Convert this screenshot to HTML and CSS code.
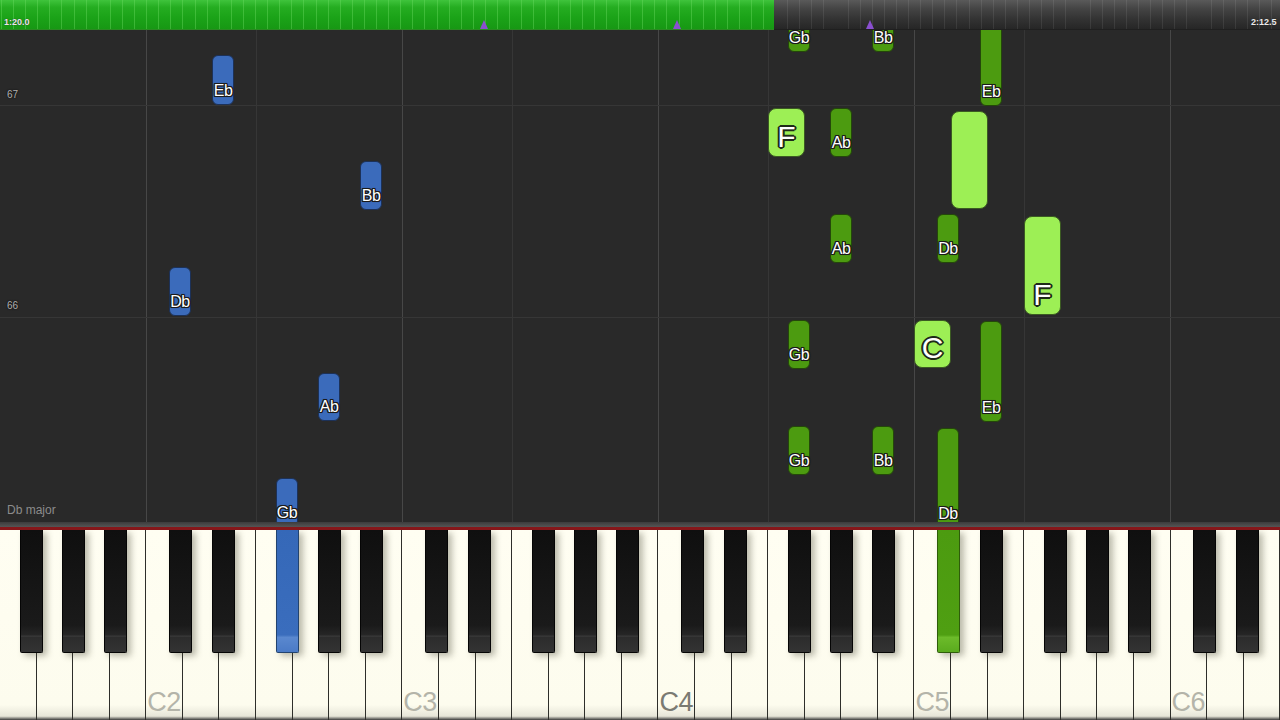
FILE: index.html
```html
<!DOCTYPE html>
<html>
<head>
<meta charset="utf-8">
<link rel="stylesheet" href="styles.css">
</head>
<body>
<div class="app">
  <div class="topbar">
    <div class="progress"></div>
    <div class="rest"></div>
    <span class="time time-left">1:20.0</span>
    <span class="time time-right">2:12.5</span>
    <span class="marker" style="left:480px"></span>
    <span class="marker" style="left:673px"></span>
    <span class="marker" style="left:866px"></span>
  </div>

  <div class="roll">
    <div class="vline c" style="left:146px"></div>
    <div class="vline f" style="left:256px"></div>
    <div class="vline c" style="left:402px"></div>
    <div class="vline f" style="left:512px"></div>
    <div class="vline c" style="left:658px"></div>
    <div class="vline f" style="left:768px"></div>
    <div class="vline c" style="left:914px"></div>
    <div class="vline f" style="left:1024px"></div>
    <div class="vline c" style="left:1170px"></div>
    <div class="hline" style="top:75px"></div>
    <div class="hline" style="top:287px"></div>

    <span class="measure" style="top:59px">67</span>
    <span class="measure" style="top:270px">66</span>
    <span class="keyname">Db major</span>

    <!-- left hand (blue) -->
    <div class="note blue" style="left:212px;top:25px;height:50px"><span>Eb</span></div>
    <div class="note blue" style="left:360px;top:131px;height:49px"><span>Bb</span></div>
    <div class="note blue" style="left:169px;top:237px;height:49px"><span>Db</span></div>
    <div class="note blue" style="left:318px;top:343px;height:48px"><span>Ab</span></div>
    <div class="note blue" style="left:276px;top:448px;height:49px"><span>Gb</span></div>

    <!-- right hand (green, black keys) -->
    <div class="note green" style="left:788px;top:-30px;height:52px"><span>Gb</span></div>
    <div class="note green" style="left:872px;top:-30px;height:52px"><span>Bb</span></div>
    <div class="note green" style="left:980px;top:-20px;height:96px"><span>Eb</span></div>
    <div class="note green" style="left:830px;top:78px;height:49px"><span>Ab</span></div>
    <div class="note green" style="left:830px;top:184px;height:49px"><span>Ab</span></div>
    <div class="note green" style="left:937px;top:184px;height:49px"><span>Db</span></div>
    <div class="note green" style="left:788px;top:290px;height:49px"><span>Gb</span></div>
    <div class="note green" style="left:980px;top:291px;height:101px"><span>Eb</span></div>
    <div class="note green" style="left:788px;top:396px;height:49px"><span>Gb</span></div>
    <div class="note green" style="left:872px;top:396px;height:49px"><span>Bb</span></div>
    <div class="note green" style="left:937px;top:398px;height:100px"><span>Db</span></div>

    <!-- right hand (light green, white keys) -->
    <div class="note lime" style="left:768px;top:78px;height:49px"><span>F</span></div>
    <div class="note lime" style="left:951px;top:81px;height:98px"></div>
    <div class="note lime" style="left:1024px;top:186px;height:99px"><span>F</span></div>
    <div class="note lime" style="left:914px;top:290px;height:48px"><span>C</span></div>
  </div>

  <div class="keyboard">
    <div class="band"></div>
    <div class="redline"></div>
    <div class="keys">
      <div class="whites">
        <div class="wk"></div><div class="wk"></div><div class="wk"></div><div class="wk"></div>
        <div class="wk"><span class="lbl">C2</span></div><div class="wk"></div><div class="wk"></div><div class="wk"></div><div class="wk"></div><div class="wk"></div><div class="wk"></div>
        <div class="wk"><span class="lbl">C3</span></div><div class="wk"></div><div class="wk"></div><div class="wk"></div><div class="wk"></div><div class="wk"></div><div class="wk"></div>
        <div class="wk"><span class="lbl mid">C4</span></div><div class="wk"></div><div class="wk"></div><div class="wk"></div><div class="wk"></div><div class="wk"></div><div class="wk"></div>
        <div class="wk"><span class="lbl">C5</span></div><div class="wk"></div><div class="wk"></div><div class="wk"></div><div class="wk"></div><div class="wk"></div><div class="wk"></div>
        <div class="wk"><span class="lbl">C6</span></div><div class="wk"></div><div class="wk"></div>
      </div>
      <div class="bk" style="left:19.8px"></div>
      <div class="bk" style="left:62.3px"></div>
      <div class="bk" style="left:104.3px"></div>
      <div class="bk" style="left:168.8px"></div>
      <div class="bk" style="left:211.8px"></div>
      <div class="bk on-blue" style="left:275.8px"></div>
      <div class="bk" style="left:318.3px"></div>
      <div class="bk" style="left:360.3px"></div>
      <div class="bk" style="left:424.8px"></div>
      <div class="bk" style="left:467.8px"></div>
      <div class="bk" style="left:531.8px"></div>
      <div class="bk" style="left:574.3px"></div>
      <div class="bk" style="left:616.3px"></div>
      <div class="bk" style="left:680.8px"></div>
      <div class="bk" style="left:723.8px"></div>
      <div class="bk" style="left:787.8px"></div>
      <div class="bk" style="left:830.3px"></div>
      <div class="bk" style="left:872.3px"></div>
      <div class="bk on-green" style="left:936.8px"></div>
      <div class="bk" style="left:979.8px"></div>
      <div class="bk" style="left:1043.8px"></div>
      <div class="bk" style="left:1086.3px"></div>
      <div class="bk" style="left:1128.3px"></div>
      <div class="bk" style="left:1192.8px"></div>
      <div class="bk" style="left:1235.8px"></div>
    </div>
  </div>
</div>
</body>
</html>
```

FILE: styles.css
```css
* { box-sizing: border-box; }
html, body {
  margin: 0;
  padding: 0;
  width: 1280px;
  height: 720px;
  overflow: hidden;
  background: #282828;
  font-family: "Liberation Sans", Arial, sans-serif;
}
.app {
  display: flex;
  flex-direction: column;
  width: 1280px;
  height: 720px;
}

/* ---------- top progress bar ---------- */
.topbar {
  position: relative;
  display: flex;
  height: 30px;
  flex: none;
}
.progress {
  width: 774px;
  background:
    repeating-linear-gradient(90deg, transparent 0 11.1px, rgba(110, 220, 100, 0.4) 11.1px 12.1px),
    linear-gradient(#3fc43c 0%, #25ad21 25%, #1ba318 60%, #179814 100%);
  background-position: 2px 0, 0 0;
  border-bottom: 1px solid #2b8a22;
}
.rest {
  flex: 1;
  background:
    repeating-linear-gradient(90deg, transparent 0 11.1px, rgba(255, 255, 255, 0.08) 11.1px 12.1px),
    linear-gradient(#5a5a5a 0%, #444 30%, #333 65%, #262626 100%);
  background-position: 2px 0, 0 0;
  border-bottom: 1px solid #1f1f1f;
}
.time {
  position: absolute;
  top: 17px;
  font-size: 9px;
  font-weight: bold;
  color: #eaeaea;
  line-height: 11px;
  text-shadow: 0 0 1px #222;
}
.time-left { left: 4px; }
.time-right { left: 1251px; }
.marker {
  position: absolute;
  top: 20px;
  width: 0;
  height: 0;
  border-left: 4px solid transparent;
  border-right: 4px solid transparent;
  border-bottom: 9px solid #8a4fd0;
}

/* ---------- falling notes area ---------- */
.roll {
  position: relative;
  height: 492px;
  flex: none;
  overflow: hidden;
  background: #292929;
}
.vline {
  position: absolute;
  top: 0;
  bottom: 0;
  width: 1px;
}
.vline.c { background: #474747; }
.vline.f { background: #363636; }
.hline {
  position: absolute;
  left: 0;
  right: 0;
  height: 1px;
  background: #363636;
}
.measure {
  position: absolute;
  left: 7px;
  font-size: 10px;
  line-height: 12px;
  color: #b0b0b0;
  text-shadow: 0 0 2px #111, 0 0 1px #111;
}
.keyname {
  position: absolute;
  left: 7px;
  top: 472px;
  font-size: 12px;
  line-height: 16px;
  color: #8c8c8c;
}
.note {
  position: absolute;
  width: 22px;
  border-radius: 6px;
  display: flex;
  align-items: flex-end;
  justify-content: center;
  padding-bottom: 6px;
  font-size: 16px;
  line-height: 15px;
  color: #fff;
  letter-spacing: -0.5px;
  white-space: nowrap;
  text-shadow:
    1px 0 0 #1a1a1a, -1px 0 0 #1a1a1a, 0 1px 0 #1a1a1a, 0 -1px 0 #1a1a1a,
    1px 1px 0 #1a1a1a, -1px -1px 0 #1a1a1a, 1px -1px 0 #1a1a1a, -1px 1px 0 #1a1a1a,
    0 0 2px #1a1a1a;
}
.note.blue {
  background: #3b6bbb;
  border: 1px solid #1c3158;
}
.note.green {
  background: #4c9b10;
  border: 1px solid #24470a;
}
.note.lime {
  width: 37px;
  background: #9def55;
  border: 1px solid #3b5a22;
  border-radius: 8px;
  font-size: 30px;
  line-height: 28px;
  padding-bottom: 5px;
  letter-spacing: 0;
  text-shadow:
    2px 0 0 #1f2a18, -2px 0 0 #1f2a18, 0 2px 0 #1f2a18, 0 -2px 0 #1f2a18,
    1.4px 1.4px 0 #1f2a18, -1.4px -1.4px 0 #1f2a18, 1.4px -1.4px 0 #1f2a18, -1.4px 1.4px 0 #1f2a18;
}

/* ---------- keyboard ---------- */
.keyboard {
  flex: 1;
  display: flex;
  flex-direction: column;
}
.band {
  height: 5px;
  background: linear-gradient(#3c3c3c, #555);
}
.redline {
  height: 3px;
  background: #86171a;
}
.keys {
  position: relative;
  flex: 1;
  overflow: hidden;
}
.whites {
  display: flex;
  height: 100%;
}
.wk {
  flex: 1;
  display: flex;
  align-items: flex-end;
  border-right: 1.5px solid #2e2e2a;
  background: linear-gradient(#fffef2 0%, #fdfcee 92%, #e6e5d8 98%, #3a3a3a 100%);
}
.lbl {
  font-size: 27px;
  line-height: 27px;
  padding-left: 1px;
  padding-bottom: 4px;
  color: #b4b4a9;
  letter-spacing: -0.5px;
}
.lbl.mid { color: #7a7a72; }
.bk {
  position: absolute;
  top: 0;
  width: 23px;
  height: 123px;
  border: 1px solid #050505;
  border-top: none;
  border-radius: 0 0 2px 2px;
  background:
    linear-gradient(#0f0f0f 0%, #1a1a1a 78%, #262626 86%, #3a3a3a 87%, #2c2c2c 88%, #333 100%);
  box-shadow: 4px 3px 6px rgba(60, 60, 40, 0.35);
}
.bk.on-blue {
  background:
    linear-gradient(#3568b8 0%, #3a6dbd 86%, #5a88cf 88%, #4a7ac6 100%);
  border-color: #22436f;
}
.bk.on-green {
  background:
    linear-gradient(#4c9b10 0%, #4f9f12 86%, #6cbb2a 88%, #5aab1e 100%);
  border-color: #2f5d0a;
}
```
